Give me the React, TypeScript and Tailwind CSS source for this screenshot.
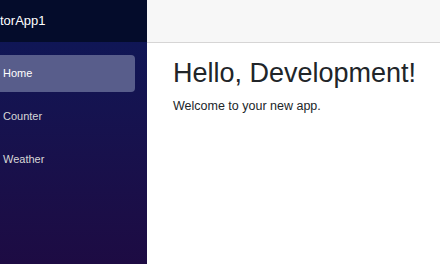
const navItems = [
  { label: "Home", active: true },
  { label: "Counter", active: false },
  { label: "Weather", active: false },
];

export default function App() {
  return (
    <div className="flex h-screen w-full overflow-hidden bg-white font-['Liberation_Sans',Arial,sans-serif]">
      <aside className="flex w-[147px] shrink-0 flex-col bg-gradient-to-b from-[#0b1859] to-[#1d0b43]">
        <div className="flex h-[42px] shrink-0 items-center bg-[#040c2b] text-[13px] text-white">
          torApp1
        </div>
        <nav className="pt-[13px]">
          {navItems.map((item) => (
            <div key={item.label} className="h-[43px] pb-[6px]">
              <a
                href="#"
                className={
                  item.active
                    ? "mr-[12px] flex h-[37px] items-center rounded-r-[4px] bg-[#585d8b] pl-[3px] text-[11px] text-white"
                    : "mr-[12px] flex h-[37px] items-center pl-[3px] text-[11px] text-[#d7d7d7]"
                }
              >
                {item.label}
              </a>
            </div>
          ))}
        </nav>
      </aside>
      <main className="flex flex-1 flex-col">
        <div className="h-[43px] shrink-0 border-b border-[#d6d5d5] bg-[#f7f7f7]" />
        <article className="pl-[26px] pt-[14px] text-[#212529]">
          <h1 className="text-[27px] leading-[32px]">Hello, Development!</h1>
          <p className="mt-[10px] text-[12.5px] leading-[15px]">Welcome to your new app.</p>
        </article>
      </main>
    </div>
  );
}
